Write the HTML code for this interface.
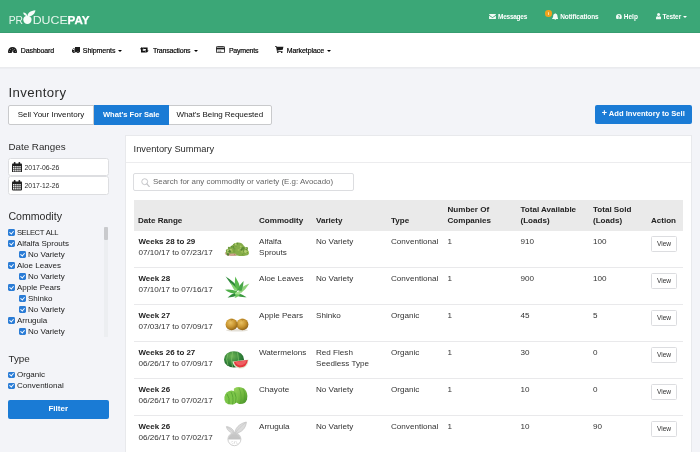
<!DOCTYPE html>
<html>
<head>
<meta charset="utf-8">
<title>Inventory</title>
<style>
*{box-sizing:border-box;margin:0;padding:0}
html,body{width:700px;height:452px;overflow:hidden}
body{background:#f3f4f8;font-family:"Liberation Sans",sans-serif;color:#333;font-size:8px;position:relative}
.abs{position:absolute;white-space:nowrap}
#top{position:absolute;left:0;top:0;width:700px;height:33px;background:#3ba777;border-bottom:1px solid #379d70}
#nav{position:absolute;left:0;top:33px;width:700px;height:35px;background:#fff;border-bottom:1px solid #eaebee;box-shadow:0 1px 0 #edeef2}
.tn{position:absolute;top:0;height:33px;line-height:33px;color:#fff;font-size:6.5px;font-weight:bold;white-space:nowrap}
.nv{position:absolute;top:33.6px;height:34px;line-height:34px;color:#000;-webkit-text-stroke:.18px #000;font-size:7px;white-space:nowrap}
.caret{display:inline-block;width:0;height:0;border-left:2px solid transparent;border-right:2px solid transparent;border-top:2.5px solid currentColor;vertical-align:middle;margin-left:3px}
h1{position:absolute;left:8.4px;top:85px;font-size:13.2px;letter-spacing:.42px;font-weight:normal;color:#2b2b2b;line-height:16px}
.tabs{position:absolute;left:8px;top:105px;height:19.5px;display:flex;border:1px solid #c9cacc;border-radius:2px;background:#fff}
.tabs div{height:17.5px;line-height:17.5px;font-size:8px;color:#111;text-align:center;border-right:1px solid #c9cacc}
.tabs div:last-child{border-right:0}
.tabs .on{background:#1a7bd5;color:#fff;font-weight:bold;margin:-1px 0;height:19.5px;line-height:19.5px;border-right:0;font-size:7.6px}
.btn{position:absolute;background:#1a7bd5;color:#fff;font-weight:bold;text-align:center;border-radius:2px;font-size:8px}
.sh{position:absolute;left:8.4px;font-size:10.5px;color:#2b2b2b;line-height:12px}
.inp{position:absolute;left:8px;width:101px;height:17.5px;background:#fff;border:1px solid #dddee1;border-radius:2.5px}
.inp span{position:absolute;left:15.6px;top:.6px;line-height:15.5px;font-size:6.8px;color:#2a2a2a}
.ck{position:absolute;font-size:8px;line-height:11px;color:#222;white-space:nowrap}
.ck i{position:absolute;left:-8.7px;top:2.2px;width:6.6px;height:6.6px;background:#2a7cd6;border-radius:1.4px}
.ck i:after{content:"";position:absolute;left:2.1px;top:0.9px;width:1.8px;height:3.2px;border:solid #fff;border-width:0 1px 1px 0;transform:rotate(40deg)}
#panel{position:absolute;left:125px;top:135px;width:567px;height:330px;background:#fff;border:1px solid #e8e9ec}
#ph{position:absolute;left:0;top:0;width:565px;height:26.5px;border-bottom:1px solid #ececee}
#ph span{position:absolute;left:7.6px;top:7.4px;font-size:9.3px;line-height:12px;color:#2b2b2b}
#search{position:absolute;left:133px;top:173px;width:221px;height:18px;border:1px solid #dcdde0;border-radius:2px;background:#fff}
#search span{position:absolute;left:19px;top:0;line-height:16px;font-size:7.9px;color:#666}
#thead{position:absolute;left:134px;top:200px;width:549px;height:31px;background:#eaeaea}
.th{position:absolute;font-weight:bold;font-size:8.05px;line-height:11px;color:#222;white-space:nowrap}
.row{position:absolute;left:134px;width:549px;height:37px;border-bottom:1px solid #e9e9eb}
.c{position:absolute;top:5px;font-size:8.1px;line-height:11px;color:#333;white-space:nowrap}
.c b{color:#222;font-size:7.95px}
.view{position:absolute;left:517px;top:5px;width:26px;height:16px;border:1px solid #dcdde0;border-radius:1.5px;font-size:6.6px;line-height:14px;text-align:center;color:#333;background:#fff}
.img{position:absolute;left:91px;top:8px;width:24px;height:20px}
</style>
</head>
<body>
<div id="wrap" style="position:absolute;left:0;top:0;width:700px;height:452px;will-change:transform;overflow:hidden">
<div id="top"></div>
<div id="nav"></div>

<!-- logo -->
<svg class="abs" style="left:6px;top:7.5px" width="90" height="18" viewBox="0 0 90 18">
  <text x="2.7" y="15.6" font-family="Liberation Sans, sans-serif" font-size="11" fill="#e6f6ed" textLength="14.4" lengthAdjust="spacingAndGlyphs">PR</text>
  <circle cx="21.4" cy="11.8" r="4.15" fill="#f6fcf9"/>
  <path d="M21.6 8.3C21 5.6 24.4 2.4 29.4 2.2C29.2 5.8 25.6 8.8 21.6 8.3Z" fill="#f6fcf9"/>
  <path d="M21.4 8.2C21 6.2 19.4 4.6 17.2 4.6C17.4 6.8 19.2 8.4 21.4 8.2Z" fill="#f6fcf9"/>
  <text x="26.7" y="15.6" font-family="Liberation Sans, sans-serif" font-size="11" fill="#e6f6ed" textLength="35" lengthAdjust="spacingAndGlyphs">DUCE</text>
  <text x="61.6" y="15.6" font-family="Liberation Sans, sans-serif" font-size="11" font-weight="bold" fill="#ffffff" stroke="#fff" stroke-width=".25" textLength="22" lengthAdjust="spacingAndGlyphs">PAY</text>
</svg>

<!-- top right nav -->
<svg class="abs" style="left:488.5px;top:14px" width="7" height="5.4" viewBox="0 0 14 11"><path d="M0 1.2Q0 0 1.2 0H12.8Q14 0 14 1.2V1.6L7 6.6 0 1.6Z M0 3.4L7 8.4 14 3.4V9.8Q14 11 12.8 11H1.2Q0 11 0 9.8Z" fill="#f2faf6"/></svg>
<div class="tn" style="left:498px;letter-spacing:-.25px">Messages</div>
<div class="abs" style="left:545px;top:10.3px;width:6.6px;height:6.6px;border-radius:50%;background:#f0a21c"></div>
<div class="abs" style="left:547.6px;top:11.9px;width:1.2px;height:3px;background:#fbe3a6;border-radius:.5px"></div>
<svg class="abs" style="left:551.8px;top:13px" width="6.6" height="7" viewBox="0 0 14 15"><path d="M7 0.3C7.7 0.3 8.1 0.8 8 1.5C10.4 2 11.6 4 11.6 6.5C11.6 9.4 12.6 10.8 13.8 11.8V12.6H0.2V11.8C1.4 10.8 2.4 9.4 2.4 6.5C2.4 4 3.6 2 6 1.5C5.9 0.8 6.3 0.3 7 0.3Z M5.2 13.2H8.8C8.8 14.2 8 14.9 7 14.9C6 14.9 5.2 14.2 5.2 13.2Z" fill="#f2faf6"/></svg>
<div class="tn" style="left:560.2px;letter-spacing:-.07px">Notifications</div>
<svg class="abs" style="left:616.3px;top:13.5px" width="5.8" height="5.8" viewBox="0 0 12 12"><circle cx="6" cy="6" r="6" fill="#f2faf6"/><path d="M4 4.6C4 3.3 4.9 2.6 6.1 2.6C7.3 2.6 8.2 3.3 8.2 4.4C8.2 5.8 6.8 5.8 6.8 7.2H5.3C5.3 5.5 6.6 5.5 6.6 4.5C6.6 4.1 6.4 3.9 6 3.9C5.6 3.9 5.4 4.2 5.4 4.6Z M5.2 8H6.9V9.6H5.2Z" fill="#3ba777"/></svg>
<div class="tn" style="left:623.8px">Help</div>
<svg class="abs" style="left:655.8px;top:13.2px" width="5.2" height="6.4" viewBox="0 0 10 12"><circle cx="5" cy="2.9" r="2.9" fill="#f2faf6"/><path d="M0 12V9.2C0 7.2 1.6 6.2 3 6.2C3.6 6.7 4.3 6.9 5 6.9C5.7 6.9 6.4 6.7 7 6.2C8.4 6.2 10 7.2 10 9.2V12Z" fill="#f2faf6"/></svg>
<div class="tn" style="left:662.6px;letter-spacing:-.09px">Tester<span class="caret" style="margin-left:2.4px"></span></div>

<!-- nav -->
<svg class="abs" style="left:8px;top:46.6px" width="9" height="6.8" viewBox="0 0 18 13.6"><path d="M9 0C4 0 0 4 0 9C0 10.6 0.4 12.2 1.2 13.6H16.8C17.6 12.2 18 10.6 18 9C18 4 14 0 9 0Z" fill="#1c1c1c"/><circle cx="3.3" cy="9" r=".75" fill="#fff"/><circle cx="5" cy="4.9" r=".75" fill="#fff"/><circle cx="9" cy="3.1" r=".75" fill="#fff"/><circle cx="13" cy="4.9" r=".75" fill="#fff"/><circle cx="14.7" cy="9" r=".75" fill="#fff"/><path d="M9.8 5.4L9 9.4A1.6 1.6 0 1 0 10 9.6L10.8 5.6Z" fill="#fff"/></svg>
<div class="nv" style="left:20.8px;letter-spacing:-.11px">Dashboard</div>
<svg class="abs" style="left:71.8px;top:46.7px" width="8.2" height="6.8" viewBox="0 0 16.4 13.6"><path d="M6 0H15.8Q16.4 0 16.4 0.6V10.6H6Z M0 6.2L2.6 2.6H5.2V10.6H0Z" fill="#1c1c1c"/><path d="M1.3 6L3.1 3.7H4.1V6Z" fill="#fff"/><circle cx="3.6" cy="11.2" r="2.1" fill="#1c1c1c" stroke="#fff" stroke-width=".45"/><circle cx="12" cy="11.2" r="2.1" fill="#1c1c1c" stroke="#fff" stroke-width=".45"/></svg>
<div class="nv" style="left:82.8px;letter-spacing:-.06px">Shipments<span class="caret"></span></div>
<svg class="abs" style="left:140.2px;top:46.9px" width="8.6" height="5.8" viewBox="0 0 17.2 11.6"><g fill="#111"><path d="M3.7 0L7.6 4.4H5.4V7.6H9.8L12.4 10.8H2V4.4H-.2Z"/><path d="M13.5 11.6L9.6 7.2H11.8V4H7.4L4.8 0.8H15.2V7.2H17.4Z"/></g></svg>
<div class="nv" style="left:152.9px;letter-spacing:-.19px">Transactions<span class="caret" style="margin-left:4px"></span></div>
<svg class="abs" style="left:215.8px;top:46px" width="9" height="7.2" viewBox="0 0 18 14.4"><rect x=".9" y=".9" width="16.2" height="12.6" rx="1.6" fill="#fff" stroke="#1c1c1c" stroke-width="1.8"/><rect x=".9" y="3.2" width="16.2" height="3.6" fill="#1c1c1c"/><rect x="3.2" y="9.6" width="2.4" height="1.4" fill="#1c1c1c"/><rect x="6.6" y="9.6" width="3.8" height="1.4" fill="#1c1c1c"/></svg>
<div class="nv" style="left:228.9px;letter-spacing:-.22px">Payments</div>
<svg class="abs" style="left:275.2px;top:45.8px" width="8.4" height="7.4" viewBox="0 0 16.8 14.8"><path d="M0 0H2.8L3.4 1.6H16.8L15.6 7.6L5 8.8L5.3 10H15V11.4H4L2 1.4H0Z" fill="#1c1c1c"/><circle cx="5.6" cy="13.2" r="1.5" fill="#1c1c1c"/><circle cx="13.4" cy="13.2" r="1.5" fill="#1c1c1c"/></svg>
<div class="nv" style="left:286.8px;letter-spacing:-.09px">Marketplace<span class="caret" style="margin-left:3.4px"></span></div>

<h1>Inventory</h1>
<div class="tabs">
  <div style="width:85px">Sell Your Inventory</div>
  <div class="on" style="width:74.5px">What's For Sale</div>
  <div style="width:102.5px;letter-spacing:-.05px">What's Being Requested</div>
</div>
<div class="btn" style="left:595px;top:105px;width:96.5px;height:18.6px;line-height:18.6px;font-size:7.6px"><span style="font-size:9px;line-height:0;position:relative;top:.4px">+</span> Add Inventory to Sell</div>

<!-- sidebar -->
<div class="sh" style="top:141px;font-size:9.8px">Date Ranges</div>
<div class="inp" style="top:158px;height:18px"><svg style="position:absolute;left:2.6px;top:2.9px" width="10" height="10.4" viewBox="0 0 20 20.8"><path d="M1.6 3H18.4Q20 3 20 4.6V19.2Q20 20.8 18.4 20.8H1.6Q0 20.8 0 19.2V4.6Q0 3 1.6 3Z" fill="#1f1f1f"/><rect x="3.6" y="0" width="3.4" height="6" rx="1.5" fill="#1f1f1f"/><rect x="13" y="0" width="3.4" height="6" rx="1.5" fill="#1f1f1f"/><rect x="7.6" y="2.4" width="4.8" height="2.2" fill="#fff" opacity=".0"/><g fill="#fff"><rect x="2.0" y="8.2" width="2.9" height="2.7"/><rect x="6.2" y="8.2" width="2.9" height="2.7"/><rect x="10.4" y="8.2" width="2.9" height="2.7"/><rect x="14.6" y="8.2" width="2.9" height="2.7"/><rect x="2.0" y="12.2" width="2.9" height="2.7"/><rect x="6.2" y="12.2" width="2.9" height="2.7"/><rect x="10.4" y="12.2" width="2.9" height="2.7"/><rect x="14.6" y="12.2" width="2.9" height="2.7"/><rect x="2.0" y="16.2" width="2.9" height="2.7"/><rect x="6.2" y="16.2" width="2.9" height="2.7"/><rect x="10.4" y="16.2" width="2.9" height="2.7"/><rect x="14.6" y="16.2" width="2.9" height="2.7"/></g></svg><span>2017-06-26</span></div>
<div class="inp" style="top:176.4px;height:18.2px"><svg style="position:absolute;left:2.6px;top:2.9px" width="10" height="10.4" viewBox="0 0 20 20.8"><path d="M1.6 3H18.4Q20 3 20 4.6V19.2Q20 20.8 18.4 20.8H1.6Q0 20.8 0 19.2V4.6Q0 3 1.6 3Z" fill="#1f1f1f"/><rect x="3.6" y="0" width="3.4" height="6" rx="1.5" fill="#1f1f1f"/><rect x="13" y="0" width="3.4" height="6" rx="1.5" fill="#1f1f1f"/><rect x="7.6" y="2.4" width="4.8" height="2.2" fill="#fff" opacity=".0"/><g fill="#fff"><rect x="2.0" y="8.2" width="2.9" height="2.7"/><rect x="6.2" y="8.2" width="2.9" height="2.7"/><rect x="10.4" y="8.2" width="2.9" height="2.7"/><rect x="14.6" y="8.2" width="2.9" height="2.7"/><rect x="2.0" y="12.2" width="2.9" height="2.7"/><rect x="6.2" y="12.2" width="2.9" height="2.7"/><rect x="10.4" y="12.2" width="2.9" height="2.7"/><rect x="14.6" y="12.2" width="2.9" height="2.7"/><rect x="2.0" y="16.2" width="2.9" height="2.7"/><rect x="6.2" y="16.2" width="2.9" height="2.7"/><rect x="10.4" y="16.2" width="2.9" height="2.7"/><rect x="14.6" y="16.2" width="2.9" height="2.7"/></g></svg><span>2017-12-26</span></div>

<div class="sh" style="top:210.3px;font-size:10.6px">Commodity</div>
<div class="ck" style="left:17px;top:227px"><i></i><span style="font-size:7.6px;letter-spacing:-.45px;word-spacing:.9px">SELECT ALL</span></div>
<div class="ck" style="left:17px;top:238px"><i></i>Alfalfa Sprouts</div>
<div class="ck" style="left:28px;top:249px"><i></i>No Variety</div>
<div class="ck" style="left:17px;top:260px"><i></i>Aloe Leaves</div>
<div class="ck" style="left:28px;top:271px"><i></i>No Variety</div>
<div class="ck" style="left:17px;top:282px"><i></i>Apple Pears</div>
<div class="ck" style="left:28px;top:293px"><i></i>Shinko</div>
<div class="ck" style="left:28px;top:304px"><i></i>No Variety</div>
<div class="ck" style="left:17px;top:315px"><i></i>Arrugula</div>
<div class="ck" style="left:28px;top:326px"><i></i>No Variety</div>
<div class="abs" style="left:104px;top:227px;width:4px;height:110px;background:#eceef1"></div>
<div class="abs" style="left:104px;top:227px;width:4px;height:13px;background:#c9cacd;border-radius:1px"></div>

<div class="sh" style="top:353px;font-size:9.9px">Type</div>
<div class="ck" style="left:17px;top:369.4px"><i></i>Organic</div>
<div class="ck" style="left:17px;top:380.4px"><i></i>Conventional</div>
<div class="btn" style="left:8px;top:400px;width:100.5px;height:18.5px;line-height:18.5px">Filter</div>

<!-- panel -->
<div id="panel"><div id="ph"><span>Inventory Summary</span></div></div>
<div id="search"><svg style="position:absolute;left:7.4px;top:3.6px" width="9" height="9.4" viewBox="0 0 18 18.8"><circle cx="7.4" cy="7.4" r="5.9" fill="none" stroke="#c3c4c7" stroke-width="1.9"/><path d="M11.8 11.8L16.6 17.2" stroke="#c3c4c7" stroke-width="2.4" stroke-linecap="round"/></svg><span>Search for any commodity or variety (E.g: Avocado)</span></div>
<div id="thead"></div>
<div class="th" style="left:138px;top:215px">Date Range</div>
<div class="th" style="left:259px;top:215px">Commodity</div>
<div class="th" style="left:316px;top:215px">Variety</div>
<div class="th" style="left:391px;top:215px">Type</div>
<div class="th" style="left:447.5px;top:204px">Number Of<br>Companies</div>
<div class="th" style="left:520.5px;top:204px">Total Available<br>(Loads)</div>
<div class="th" style="left:593px;top:204px">Total Sold<br>(Loads)</div>
<div class="th" style="left:651px;top:215px">Action</div>

<div class="row" style="top:231px">
  <div class="c" style="left:4.5px"><b>Weeks 28 to 29</b><br>07/10/17 to 07/23/17</div>
  <div class="c" style="left:125px">Alfalfa<br>Sprouts</div>
  <div class="c" style="left:182px">No Variety</div>
  <div class="c" style="left:257px">Conventional</div>
  <div class="c" style="left:313.5px">1</div>
  <div class="c" style="left:386.5px">910</div>
  <div class="c" style="left:459px">100</div>
  <div class="view">View</div>
</div>
<div class="row" style="top:268px">
  <div class="c" style="left:4.5px"><b>Week 28</b><br>07/10/17 to 07/16/17</div>
  <div class="c" style="left:125px">Aloe Leaves</div>
  <div class="c" style="left:182px">No Variety</div>
  <div class="c" style="left:257px">Conventional</div>
  <div class="c" style="left:313.5px">1</div>
  <div class="c" style="left:386.5px">900</div>
  <div class="c" style="left:459px">100</div>
  <div class="view">View</div>
</div>
<div class="row" style="top:305px">
  <div class="c" style="left:4.5px"><b>Week 27</b><br>07/03/17 to 07/09/17</div>
  <div class="c" style="left:125px">Apple Pears</div>
  <div class="c" style="left:182px">Shinko</div>
  <div class="c" style="left:257px">Organic</div>
  <div class="c" style="left:313.5px">1</div>
  <div class="c" style="left:386.5px">45</div>
  <div class="c" style="left:459px">5</div>
  <div class="view">View</div>
</div>
<div class="row" style="top:342px">
  <div class="c" style="left:4.5px"><b>Weeks 26 to 27</b><br>06/26/17 to 07/09/17</div>
  <div class="c" style="left:125px">Watermelons</div>
  <div class="c" style="left:182px">Red Flesh<br>Seedless Type</div>
  <div class="c" style="left:257px">Organic</div>
  <div class="c" style="left:313.5px">1</div>
  <div class="c" style="left:386.5px">30</div>
  <div class="c" style="left:459px">0</div>
  <div class="view">View</div>
</div>
<div class="row" style="top:379px">
  <div class="c" style="left:4.5px"><b>Week 26</b><br>06/26/17 to 07/02/17</div>
  <div class="c" style="left:125px">Chayote</div>
  <div class="c" style="left:182px">No Variety</div>
  <div class="c" style="left:257px">Organic</div>
  <div class="c" style="left:313.5px">1</div>
  <div class="c" style="left:386.5px">10</div>
  <div class="c" style="left:459px">0</div>
  <div class="view">View</div>
</div>
<div class="row" style="top:416px;border-bottom:0">
  <div class="c" style="left:4.5px"><b>Week 26</b><br>06/26/17 to 07/02/17</div>
  <div class="c" style="left:125px">Arrugula</div>
  <div class="c" style="left:182px">No Variety</div>
  <div class="c" style="left:257px">Conventional</div>
  <div class="c" style="left:313.5px">1</div>
  <div class="c" style="left:386.5px">10</div>
  <div class="c" style="left:459px">90</div>
  <div class="view">View</div>
</div>

<!-- produce images -->
<svg class="abs" style="left:222px;top:238.6px" width="30" height="22" viewBox="0 0 30 22">
  <defs><filter id="b1" x="-20%" y="-20%" width="140%" height="140%"><feGaussianBlur stdDeviation=".4"/></filter></defs>
  <g filter="url(#b1)"><ellipse cx="8.5" cy="14.6" rx="5.6" ry="2.4" fill="#d9b4a2"/><ellipse cx="6" cy="13.4" rx="2.4" ry="1.3" fill="#c79a8c"/><path d="M3.6 13.5Q6 8.5 10 6.6Q13 3 16 3.6Q20 3.4 22 7Q25.6 9 27 13.4Q27.4 16 24 16.6Q20 17.6 15 16.6Q10 17.2 6.6 15Q3.6 15 3.6 13.5Z" fill="#86ad4a"/><circle cx="10.0" cy="7.8" r="1.0" fill="#5f8f36"/><circle cx="6.9" cy="8.9" r="1.1" fill="#6f9c40"/><circle cx="21.8" cy="14.0" r="0.9" fill="#7aa23f"/><circle cx="10.8" cy="8.0" r="0.8" fill="#b5cf72"/><circle cx="24.8" cy="9.3" r="1.2" fill="#6f9c40"/><circle cx="21.8" cy="9.0" r="0.9" fill="#7aa23f"/><circle cx="6.8" cy="13.2" r="1.2" fill="#b5cf72"/><circle cx="8.7" cy="11.6" r="0.8" fill="#6f9c40"/><circle cx="5.2" cy="11.6" r="1.3" fill="#6f9c40"/><circle cx="22.8" cy="12.0" r="1.0" fill="#6f9c40"/><circle cx="14.1" cy="6.2" r="0.9" fill="#9dbd55"/><circle cx="6.7" cy="12.2" r="1.5" fill="#a7c764"/><circle cx="19.7" cy="7.5" r="1.2" fill="#88ad45"/><circle cx="13.7" cy="6.9" r="1.2" fill="#6f9c40"/><circle cx="8.9" cy="11.2" r="1.2" fill="#b5cf72"/><circle cx="24.0" cy="9.4" r="0.7" fill="#b5cf72"/><circle cx="10.8" cy="11.9" r="1.4" fill="#88ad45"/><circle cx="12.0" cy="7.4" r="1.1" fill="#9dbd55"/><circle cx="12.5" cy="6.1" r="1.5" fill="#6f9c40"/><circle cx="20.4" cy="15.6" r="0.7" fill="#6f9c40"/><circle cx="11.8" cy="7.3" r="1.2" fill="#88ad45"/><circle cx="11.2" cy="8.0" r="1.1" fill="#5f8f36"/><circle cx="10.3" cy="12.3" r="0.8" fill="#9dbd55"/><circle cx="12.6" cy="10.1" r="1.0" fill="#7aa23f"/><circle cx="25.9" cy="13.4" r="1.1" fill="#b5cf72"/><circle cx="13.9" cy="6.8" r="0.7" fill="#9dbd55"/><circle cx="20.5" cy="12.2" r="1.5" fill="#9dbd55"/><circle cx="16.5" cy="11.0" r="1.0" fill="#9dbd55"/><circle cx="7.6" cy="12.4" r="1.3" fill="#557f30"/><circle cx="18.7" cy="7.5" r="0.9" fill="#a7c764"/><circle cx="13.6" cy="5.0" r="1.0" fill="#b5cf72"/><circle cx="18.6" cy="9.9" r="0.9" fill="#b5cf72"/><circle cx="5.7" cy="11.2" r="0.9" fill="#b5cf72"/><circle cx="21.2" cy="10.7" r="0.9" fill="#7aa23f"/><circle cx="6.1" cy="15.5" r="1.2" fill="#557f30"/><circle cx="25.2" cy="13.7" r="1.4" fill="#9dbd55"/><circle cx="15.4" cy="4.6" r="0.9" fill="#5f8f36"/><circle cx="12.1" cy="12.4" r="1.3" fill="#7aa23f"/><circle cx="22.1" cy="12.0" r="1.2" fill="#6f9c40"/><circle cx="12.1" cy="9.6" r="1.1" fill="#6f9c40"/><circle cx="25.2" cy="13.8" r="0.7" fill="#5f8f36"/><circle cx="21.1" cy="9.3" r="1.4" fill="#5f8f36"/><circle cx="19.4" cy="10.6" r="1.1" fill="#557f30"/><circle cx="24.5" cy="10.5" r="0.7" fill="#5f8f36"/><circle cx="5.3" cy="15.2" r="0.8" fill="#557f30"/><circle cx="23.4" cy="12.5" r="1.4" fill="#b5cf72"/><ellipse cx="11" cy="15.8" rx="3.4" ry="1.2" fill="#cfa592"/><circle cx="7.6" cy="15" r=".8" fill="#b98474"/><circle cx="12.6" cy="15.4" r=".7" fill="#b98474"/></g>
</svg>
<svg class="abs" style="left:222px;top:273px" width="30" height="27" viewBox="0 0 30 27">
  <g filter="url(#b1)">
    <path d="M15 18Q9 12 3.6 3.6Q11 8 18 16Z" fill="#2f8a3a"/>
    <path d="M14 17Q12 10 13.2 3.4Q17 9 18.6 16.5Z" fill="#58b94e"/>
    <path d="M16 18Q20 13 27.4 10.4Q24 16 19 20Z" fill="#8ed27a"/>
    <path d="M15.6 17Q18 11 21.6 8Q21.6 13 19.4 18Z" fill="#46a546"/>
    <path d="M15 18Q8 15.6 3 16.8Q8 20.6 14.6 21Z" fill="#4fb04a"/>
    <path d="M14 19.6Q9 21 5.6 24.4Q11 24.6 16.6 22Z" fill="#2f8a3a"/>
    <path d="M15 20Q20 21 24.6 24.2Q19 24.6 13.6 22.6Z" fill="#3c9a40"/>
    <path d="M13 20Q14 23 12.6 25Q17 24 18.6 20.6Z" fill="#6cc75e"/>
    <path d="M12.6 17.6Q10 13.6 8.4 9.6Q13 13 16 17.6Z" fill="#86d672"/>
    <path d="M14 19L19 18.4L17 21.6L12.6 21Z" fill="#a5e290"/>
  </g>
</svg>
<svg class="abs" style="left:222px;top:316px" width="30" height="18" viewBox="0 0 30 18">
  <defs>
    <radialGradient id="g3" cx=".4" cy=".35" r=".7"><stop offset="0" stop-color="#e8c163"/><stop offset=".55" stop-color="#c8942f"/><stop offset="1" stop-color="#8a5e17"/></radialGradient>
  </defs>
  <g filter="url(#b1)">
    <ellipse cx="15" cy="14.2" rx="11" ry="1.4" fill="#d9d3c6" opacity=".7"/>
    <ellipse cx="20.4" cy="8.4" rx="6" ry="5.8" fill="url(#g3)"/>
    <ellipse cx="9.6" cy="8.4" rx="6" ry="5.8" fill="url(#g3)"/>
    <path d="M8.6 3.4Q9.6 4.4 10.8 3.4M19.4 3.4Q20.4 4.4 21.6 3.4" stroke="#8a5e17" stroke-width=".6" fill="none"/>
  </g>
</svg>
<svg class="abs" style="left:222px;top:348.8px" width="30" height="23" viewBox="0 0 30 23">
  <defs>
    <radialGradient id="g4" cx=".4" cy=".3" r=".75"><stop offset="0" stop-color="#6fb455"/><stop offset=".6" stop-color="#2f8038"/><stop offset="1" stop-color="#1d5a27"/></radialGradient>
  </defs>
  <g filter="url(#b1)">
    <ellipse cx="12" cy="10.4" rx="10" ry="8.2" fill="url(#g4)"/>
    <path d="M6 4.5Q3.4 10 6 16.5M10.5 3Q8.6 10 10.5 18M15.5 3.4Q17.4 10 15.5 17.6" stroke="#7fc268" stroke-width="1" fill="none" opacity=".75"/>
    <path d="M10.4 12.6L26.6 10.4Q26 19.8 17.4 19.6Q11.6 19 10.4 12.6Z" fill="#dfeacb"/>
    <path d="M11.8 12.8L25.8 10.9Q25 18.4 17.6 18.4Q13 18 11.8 12.8Z" fill="#e4383d"/>
    <path d="M13.5 13L24.5 11.6Q23.6 16.2 18 16.4Q14.8 16.2 13.5 13Z" fill="#ef5f62"/>
  </g>
</svg>
<svg class="abs" style="left:222px;top:384px" width="30" height="24" viewBox="0 0 30 24">
  <defs>
    <linearGradient id="g5" x1="0" y1="0" x2="1" y2="1"><stop offset="0" stop-color="#9bd65e"/><stop offset=".6" stop-color="#6db53c"/><stop offset="1" stop-color="#3f8a26"/></linearGradient>
  </defs>
  <g filter="url(#b1)">
    <path d="M12 4.5Q17 1.6 22 4.6Q26.6 9 25 15.5Q23 20.8 17 20Q12 18 11.5 12Z" fill="url(#g5)"/>
    <path d="M2.4 13Q3.4 7.6 9.4 6.6Q14 7 15.6 11.4Q17 17 12.6 20Q7 21.8 3.6 18.4Q2 16 2.4 13Z" fill="#7cc548"/>
    <path d="M5 10Q8 14 7 20M9 8Q12 13 10.6 20.4M12.6 8.6Q15 13 13.6 19" stroke="#4f9a2e" stroke-width=".9" fill="none" opacity=".8"/>
    <path d="M17 4Q20 10 18.6 19M21 4.6Q24 10 22 18" stroke="#4f9a2e" stroke-width=".8" fill="none" opacity=".6"/>
  </g>
</svg>
<svg class="abs" style="left:222px;top:418px" width="30" height="32" viewBox="0 0 30 32">
  <g filter="url(#b1)">
    <circle cx="12.4" cy="21.2" r="6.5" fill="#fff" stroke="#c4c4c4" stroke-width=".8"/>
    <path d="M5.9 21.6A6.5 6.5 0 0 1 18.9 21.6Z" fill="#cdcdcd"/>
    <path d="M7 19.4H17.8M6.4 20.6H18.4M8 18.2H16.8M9.6 17H15.2" stroke="#b9b9b9" stroke-width=".5"/>
    <path d="M13 15.4C12.6 11 17 5.4 24.4 4C24 10 19.4 15 13 15.4Z" fill="#dcdcdc" stroke="#c2c2c2" stroke-width=".7"/>
    <path d="M13.4 15C16 11 19.6 7.6 24 4.4" stroke="#c4c4c4" stroke-width=".6" fill="none"/>
    <path d="M12.4 15.2C12 12 8.8 9 4.4 8.6C5 12.4 8.4 15.2 12.4 15.2Z" fill="#dcdcdc" stroke="#c2c2c2" stroke-width=".7"/>
    <path d="M12.2 14.8C10 12.6 7.6 10.4 4.8 8.9" stroke="#c4c4c4" stroke-width=".6" fill="none"/>
    <path d="M9.4 24.4L10.6 23M12.4 25.6V23.4M14.6 24.6L13.8 23.2M10.4 26.2L11 25.2M15.4 26L14.6 25" stroke="#c9c9c9" stroke-width=".7"/>
  </g>
</svg>
</div>
</body>
</html>
